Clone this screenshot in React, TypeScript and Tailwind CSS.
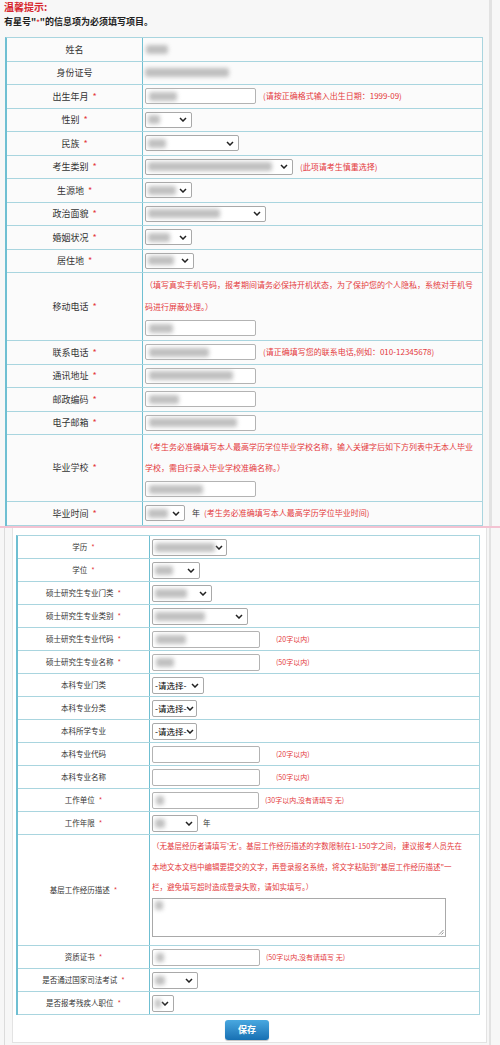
import React from "react";

// Small building blocks for the registration form
const RED = "text-[#e4393c]";

const Star = () => <span className={`${RED} ml-[4px]`}>*</span>;

const Blur = ({ className = "" }: { className?: string }) => (
    <div className={`h-[9px] rounded-[2px] bg-[#b0b0b0] blur-[2px] opacity-80 ${className}`} />
);

const Chevron = () => (
    <svg width="8" height="5" viewBox="0 0 8 5" className="shrink-0">
        <path d="M1 1l3 3 3-3" fill="none" stroke="#222" strokeWidth="1.5" />
    </svg>
);

const Input = ({ className = "", children }: { className?: string; children?: React.ReactNode }) => (
    <div className={`h-[16px] shrink-0 border border-[#b3b3b3] rounded-[2px] bg-white flex items-center px-[3px] ${className}`}>
        {children}
    </div>
);

const Select = ({ className = "", children }: { className?: string; children?: React.ReactNode }) => (
    <div className={`h-[16px] shrink-0 border border-[#a9a9a9] rounded-[2px] bg-white flex items-center justify-between pl-[2px] pr-[4px] ${className}`}>
        <div className="flex items-center">{children}</div>
        <Chevron />
    </div>
);

const Choose = () => <span className="text-[8.5px] text-black leading-none whitespace-nowrap">-请选择-</span>;

type RowProps = {
    label: string;
    required?: boolean;
    h: string;
    labelW: string;
    size: string;
    children?: React.ReactNode;
    col?: boolean;
};

const Row = ({ label, required, h, labelW, size, children, col }: RowProps) => (
    <div className={`flex border-b border-[#a9d5df] ${h}`}>
        <div className={`${labelW} shrink-0 border-r border-[#6fbfd2] flex items-center justify-center ${size} text-[#333] whitespace-nowrap`}>
            {label}
            {required && <Star />}
        </div>
        <div className={`flex-1 pl-[2px] ${col ? "flex flex-col" : "flex items-center"}`}>{children}</div>
    </div>
);

const Hint = ({ className = "", children }: { className?: string; children: React.ReactNode }) => (
    <span className={`${RED} whitespace-nowrap ${className}`}>{children}</span>
);

export default function App() {
    const top = { h: "h-[23.5px]", labelW: "w-[136px]", size: "text-[9px]" };
    const bot = { h: "h-[23px]", labelW: "w-[132px]", size: "text-[7.5px]" };

    return (
        <div className="w-[500px] min-h-[1045px] bg-[#f7f7f7] font-['Microsoft_YaHei','Noto_Sans_CJK_SC',sans-serif] overflow-hidden">
            {/* first page capture */}
            <section className="h-[526px] flex">
                <div className="w-[488px]">
                    <div className="h-[13px] pl-[4px] text-[10px] font-bold text-[#d7282f] leading-[13px]">温馨提示:</div>
                    <div className="h-[14px] mt-[2px] pl-[4px] text-[9px] font-bold text-[#222] leading-[14px]">
                        有星号"<span className={`${RED} text-[7px] align-top`}>*</span>"的信息项为必须填写项目。
                    </div>
                    <div className="mt-[8px] ml-[5px] w-[478px] border border-[#a9d5df] border-l-[2px] border-l-[#6fbfd2] border-b-0 bg-[#fbfbfb]">
                        <Row label="姓名" {...top}>
                            <Blur className="w-[22px] ml-[1px]" />
                        </Row>
                        <Row label="身份证号" {...top}>
                            <Blur className="w-[84px] opacity-40" />
                        </Row>
                        <Row label="出生年月" required {...top}>
                            <Input className="w-[111px]"><Blur className="w-[28px]" /></Input>
                            <Hint className="ml-[7px] text-[8px]">(请按正确格式输入出生日期：1999-09)</Hint>
                        </Row>
                        <Row label="性别" required {...top}>
                            <Select className="w-[47px]"><Blur className="w-[12px]" /></Select>
                        </Row>
                        <Row label="民族" required {...top}>
                            <Select className="w-[94px]"><Blur className="w-[18px]" /></Select>
                        </Row>
                        <Row label="考生类别" required {...top}>
                            <Select className="w-[148px]"><Blur className="w-[124px]" /></Select>
                            <Hint className="ml-[7px] text-[8px]">(此项请考生慎重选择)</Hint>
                        </Row>
                        <Row label="生源地" required {...top}>
                            <Select className="w-[47px]"><Blur className="w-[28px]" /></Select>
                        </Row>
                        <Row label="政治面貌" required {...top}>
                            <Select className="w-[121px]"><Blur className="w-[72px]" /></Select>
                        </Row>
                        <Row label="婚姻状况" required {...top}>
                            <Select className="w-[47px]"><Blur className="w-[22px]" /></Select>
                        </Row>
                        <Row label="居住地" required {...top}>
                            <Select className="w-[49px]"><Blur className="w-[26px]" /></Select>
                        </Row>
                        <Row label="移动电话" required h="h-[68px]" labelW={top.labelW} size={top.size} col>
                            <div className={`${RED} text-[8px] leading-[22px] pt-[1px] whitespace-nowrap`}>
                                （填写真实手机号码，报考期间请务必保持开机状态，为了保护您的个人隐私，系统对手机号
                                <br />
                                码进行屏蔽处理。）
                            </div>
                            <Input className="w-[111px] mt-[2px]"><Blur className="w-[24px]" /></Input>
                        </Row>
                        <Row label="联系电话" required {...top}>
                            <Input className="w-[111px]"><Blur className="w-[60px]" /></Input>
                            <Hint className="ml-[7px] text-[8px]">(请正确填写您的联系电话,例如：010-12345678)</Hint>
                        </Row>
                        <Row label="通讯地址" required {...top}>
                            <Input className="w-[111px]"><Blur className="w-[84px]" /></Input>
                        </Row>
                        <Row label="邮政编码" required {...top}>
                            <Input className="w-[111px]"><Blur className="w-[30px]" /></Input>
                        </Row>
                        <Row label="电子邮箱" required {...top}>
                            <Input className="w-[111px]"><Blur className="w-[88px]" /></Input>
                        </Row>
                        <Row label="毕业学校" required h="h-[67px]" labelW={top.labelW} size={top.size} col>
                            <div className={`${RED} text-[8px] leading-[21px] pt-[1px] whitespace-nowrap`}>
                                （考生务必准确填写本人最高学历学位毕业学校名称，输入关键字后如下方列表中无本人毕业
                                <br />
                                学校，需自行录入毕业学校准确名称。）
                            </div>
                            <Input className="w-[111px] mt-[3px]"><Blur className="w-[54px]" /></Input>
                        </Row>
                        <Row label="毕业时间" required {...top}>
                            <Select className="w-[40px]"><Blur className="w-[20px]" /></Select>
                            <span className="ml-[7px] text-[8px] text-[#333]">年</span>
                            <Hint className="ml-[4px] text-[8px]">(考生务必准确填写本人最高学历学位毕业时间)</Hint>
                        </Row>
                    </div>
                </div>
                <div className="w-[3px] bg-[#e2e2e2] ml-[1px]" />
            </section>

            <div className="h-[2px] bg-[#f3c3d2]" />

            {/* second page capture */}
            <section className="flex h-[517px]">
                <div className="w-[1px] ml-[4px] bg-[#dcdcdc]" />
                <div className="ml-[7px] w-[475px] h-[515px] bg-white border border-[#e3e3e3] border-t-0 pt-[7px] pl-[3px]">
                    <div className="w-[464px] border border-[#a9d5df] border-l-[2px] border-l-[#6fbfd2] border-b-0">
                        <Row label="学历" required {...bot}>
                            <Select className="w-[75px] h-[17px]"><Blur className="w-[60px]" /></Select>
                        </Row>
                        <Row label="学位" required {...bot}>
                            <Select className="w-[48px] h-[17px]"><Blur className="w-[18px]" /></Select>
                        </Row>
                        <Row label="硕士研究生专业门类" required {...bot}>
                            <Select className="w-[60px] h-[17px]"><Blur className="w-[32px]" /></Select>
                        </Row>
                        <Row label="硕士研究生专业类别" required {...bot}>
                            <Select className="w-[96px] h-[17px]"><Blur className="w-[50px]" /></Select>
                        </Row>
                        <Row label="硕士研究生专业代码" required {...bot}>
                            <Input className="w-[108px] h-[17px]"><Blur className="w-[30px]" /></Input>
                            <Hint className="ml-[16px] text-[7px]">(20字以内)</Hint>
                        </Row>
                        <Row label="硕士研究生专业名称" required {...bot}>
                            <Input className="w-[108px] h-[17px]"><Blur className="w-[18px]" /></Input>
                            <Hint className="ml-[16px] text-[7px]">(50字以内)</Hint>
                        </Row>
                        <Row label="本科专业门类" {...bot}>
                            <Select className="w-[52px] h-[17px]"><Choose /></Select>
                        </Row>
                        <Row label="本科专业分类" {...bot}>
                            <Select className="w-[45px] h-[17px] pr-[1px]"><Choose /></Select>
                        </Row>
                        <Row label="本科所学专业" {...bot}>
                            <Select className="w-[45px] h-[17px] pr-[1px]"><Choose /></Select>
                        </Row>
                        <Row label="本科专业代码" {...bot}>
                            <Input className="w-[108px] h-[17px]" />
                            <Hint className="ml-[16px] text-[7px]">(20字以内)</Hint>
                        </Row>
                        <Row label="本科专业名称" {...bot}>
                            <Input className="w-[108px] h-[17px]" />
                            <Hint className="ml-[16px] text-[7px]">(50字以内)</Hint>
                        </Row>
                        <Row label="工作单位" required {...bot}>
                            <Input className="w-[107px] h-[17px]"><Blur className="w-[8px]" /></Input>
                            <Hint className="ml-[6px] text-[7px]">(30字以内,没有请填写 无)</Hint>
                        </Row>
                        <Row label="工作年限" required {...bot}>
                            <Select className="w-[46px] h-[17px]"><Blur className="w-[10px] opacity-40" /></Select>
                            <span className="ml-[5px] text-[7.5px] text-[#333]">年</span>
                        </Row>
                        <Row label="基层工作经历描述" required h="h-[111px]" labelW={bot.labelW} size={bot.size} col>
                            <div className={`${RED} text-[7.5px] leading-[20.5px] pt-[1px] whitespace-nowrap`}>
                                （无基层经历者请填写'无'。基层工作经历描述的字数限制在1-150字之间， 建议报考人员先在
                                <br />
                                本地文本文档中编辑要提交的文字，再登录报名系统，将文字粘贴到"基层工作经历描述"一
                                <br />
                                栏，避免填写超时造成登录失败，请如实填写。）
                            </div>
                            <div className="relative w-[294px] h-[39px] border border-[#a9a9a9] bg-white p-[2px]">
                                <Blur className="w-[8px]" />
                                <svg width="6" height="6" viewBox="0 0 6 6" className="absolute right-[1px] bottom-[1px]">
                                    <path d="M5.5 1L1 5.5M5.5 3.5L3.5 5.5" stroke="#777" strokeWidth="0.8" />
                                </svg>
                            </div>
                        </Row>
                        <Row label="资质证书" required {...bot}>
                            <Input className="w-[108px] h-[17px]"><Blur className="w-[8px]" /></Input>
                            <Hint className="ml-[6px] text-[7px]">(50字以内,没有请填写 无)</Hint>
                        </Row>
                        <Row label="是否通过国家司法考试" required {...bot}>
                            <Select className="w-[46px] h-[17px]"><Blur className="w-[10px]" /></Select>
                        </Row>
                        <Row label="是否报考残疾人职位" required {...bot}>
                            <Select className="w-[22px] h-[17px] pr-[2px]"><Blur className="w-[6px]" /></Select>
                        </Row>
                    </div>
                    <div className="flex justify-center mt-[5px] pr-[8px]">
                        <button className="w-[44px] h-[20px] rounded-[3px] bg-gradient-to-b from-[#49a8e0] to-[#1670b3] text-white text-[9px] font-bold shadow-[0_1px_1px_rgba(0,0,0,0.25)]">
                            保存
                        </button>
                    </div>
                </div>
                <div className="w-[2px] ml-[2px] bg-[#e2e2e2]" />
            </section>
        </div>
    );
}
